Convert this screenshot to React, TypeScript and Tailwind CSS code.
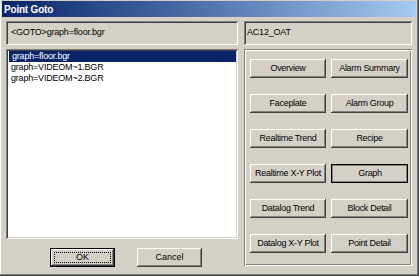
import React from "react";

const font = { fontFamily: '"Liberation Sans", Arial, sans-serif' };

const raised =
  "shadow-[inset_-1px_-1px_#404040,inset_1px_1px_#fff,inset_-2px_-2px_#808080,inset_2px_2px_#d4d0c8]";
const sunken =
  "shadow-[inset_1px_1px_#808080,inset_-1px_-1px_#fff,inset_2px_2px_#404040,inset_-2px_-2px_#d4d0c8]";
const etched =
  "shadow-[inset_1px_1px_#808080,inset_-1px_-1px_#fff,inset_2px_2px_#fff,inset_-2px_-2px_#808080]";

function Btn({ label, pressed }: { label: string; pressed?: boolean }) {
  if (pressed) {
    return (
      <div className="h-[19px] flex items-center justify-center border border-black shadow-[inset_1px_1px_#808080,inset_-1px_-1px_#808080] text-[9px] tracking-[-0.3px] text-black pt-[1px] pl-[1px]">
        {label}
      </div>
    );
  }
  return (
    <div className={`h-[19px] flex items-center justify-center ${raised} text-[9px] tracking-[-0.3px] text-black`}>
      {label}
    </div>
  );
}

export default function App() {
  const items = ["graph=floor.bgr", "graph=VIDEOM~1.BGR", "graph=VIDEOM~2.BGR"];
  const buttons = [
    "Overview",
    "Alarm Summary",
    "Faceplate",
    "Alarm Group",
    "Realtime Trend",
    "Recipe",
    "Realtime X-Y Plot",
    "Graph",
    "Datalog Trend",
    "Block Detail",
    "Datalog X-Y Plot",
    "Point Detail",
  ];

  return (
    <div
      style={font}
      className="w-[419px] h-[276px] bg-[#d4d0c8] pt-[1px] pl-[2px] pr-[3px] pb-[3px] flex flex-col shadow-[inset_-1px_-1px_#404040,inset_-2px_-2px_#808080,inset_1px_0_#fff]"
    >
      {/* title bar */}
      <div className="h-[16px] bg-gradient-to-r from-[#0a246a] to-[#a6caf0] flex items-center pl-[2px]">
        <span className="text-white font-bold text-[10px] tracking-[-0.2px]">Point Goto</span>
      </div>

      <div className="flex gap-[6px] pl-[4px] pt-[4px]">
        {/* left column */}
        <div className="w-[232px] flex flex-col">
          <div className={`h-[24px] flex items-center pl-[5px] ${sunken} text-[9px] tracking-[-0.2px] text-black`}>
            &lt;GOTO&gt;graph=floor.bgr
          </div>
          <div className={`mt-[4px] h-[190px] bg-white ${sunken} pt-[2px] px-[2px]`}>
            {items.map((it, i) => (
              <div
                key={it}
                className={`h-[11px] flex items-center pl-[3px] text-[9px] tracking-[-0.2px] ${
                  i === 0 ? "bg-[#0a246a] text-white ml-[1px]" : "text-black"
                }`}
              >
                {it}
              </div>
            ))}
          </div>
          <div className="flex gap-[22px] pl-[44px] mt-[9px]">
            <div className="w-[65px] h-[19px] border border-black">
              <div className={`w-full h-full ${raised} p-[3px]`}>
                <div className="w-full h-full border border-dotted border-black flex items-center justify-center text-[9px] text-black">
                  OK
                </div>
              </div>
            </div>
            <div className={`w-[65px] h-[19px] ${raised} flex items-center justify-center text-[9px] text-black`}>
              Cancel
            </div>
          </div>
        </div>

        {/* right column */}
        <div className="w-[168px] flex flex-col">
          <div className={`h-[24px] flex items-center pl-[3px] ${sunken} text-[9px] tracking-[-0.2px] text-black`}>
            AC12_OAT
          </div>
          <div className={`mt-[4px] h-[217px] ${etched} pt-[10px] pl-[6px] pr-[4px]`}>
            <div className="grid grid-cols-[76px_77px] gap-x-[5px] gap-y-[16px]">
              {buttons.map((b) => (
                <Btn key={b} label={b} pressed={b === "Graph"} />
              ))}
            </div>
          </div>
        </div>
      </div>
    </div>
  );
}
